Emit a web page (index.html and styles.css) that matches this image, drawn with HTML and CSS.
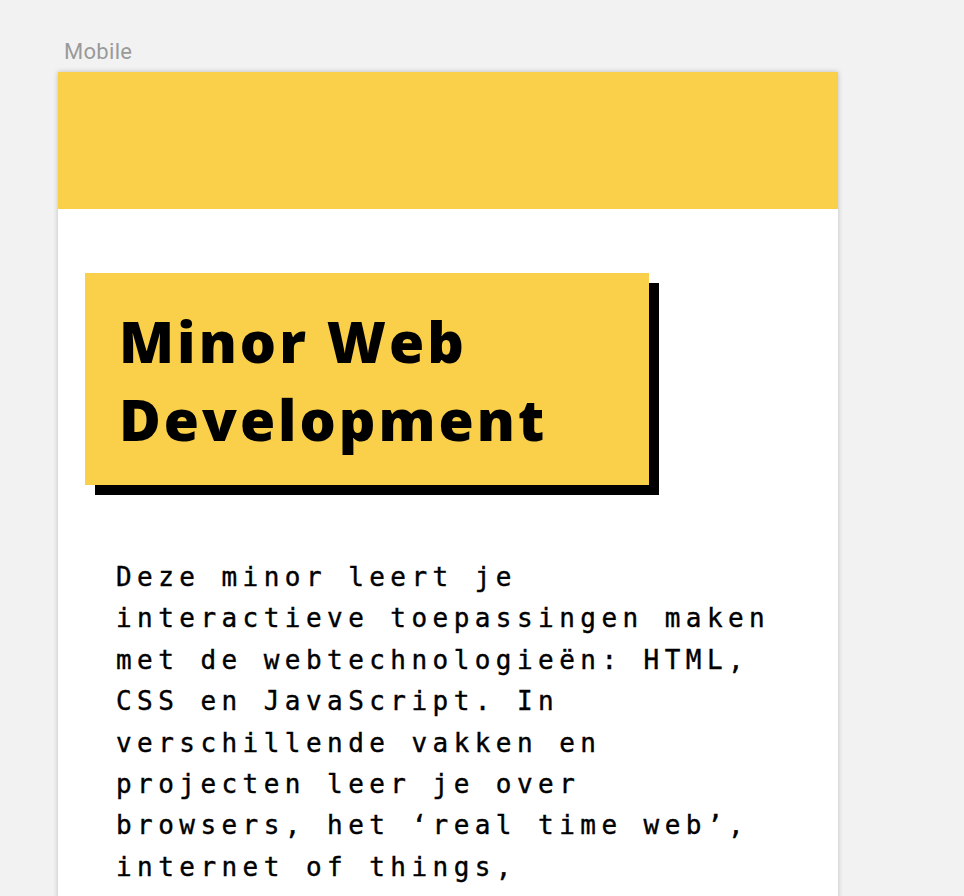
FILE: index.html
```html
<!DOCTYPE html>
<html lang="nl">
<head>
<meta charset="utf-8">
<title>Mobile</title>
<link rel="stylesheet" href="styles.css">
</head>
<body>
  <div class="canvas">
    <div class="frame-label">Mobile</div>
    <div class="frame">
      <header class="topbar"></header>
      <main class="content">
        <h1 class="title">Minor Web<br>Development</h1>
        <p class="intro">Deze minor leert je interactieve toepassingen maken met de webtechnologieën: HTML, CSS en JavaScript. In verschillende vakken en projecten leer je over browsers, het ‘real time web’, internet of things, performance, toegankelijkheid en interactiedesign.</p>
      </main>
    </div>
  </div>
</body>
</html>
```
FILE: styles.css
```css
html, body {
  margin: 0;
  padding: 0;
  overflow: hidden;
  height: 100%;
}
body {
  background: #f2f2f2;
}
.canvas {
  padding: 40px 0 0 58px;
}
.frame-label {
  font-family: Roboto, "Liberation Sans", sans-serif;
  font-size: 22px;
  line-height: 24px;
  color: #9a9a9a;
  padding-left: 6px;
  margin-bottom: 8px;
  letter-spacing: 0.3px;
}
.frame {
  width: 780px;
  min-height: 1000px;
  background: #fff;
  box-shadow: 0 0 5px rgba(0, 0, 0, 0.22);
}
.topbar {
  height: 137px;
  background: #fad04a;
}
.content {
  padding: 64px 58px 0 27px;
}
.title {
  margin: 0;
  width: 564px;
  height: 212px;
  box-sizing: border-box;
  padding: 29px 0 0 34px;
  background: #fad04a;
  box-shadow: 10px 10px 0 #000;
  font-family: "Open Sans", Inter, sans-serif;
  font-weight: 800;
  font-size: 57px;
  line-height: 78px;
  letter-spacing: 3px;
  color: #000;
}
.intro {
  margin: 72px 0 0 31px;
  font-family: "DejaVu Sans Mono", "Liberation Mono", monospace;
  font-size: 26px;
  line-height: 41.4px;
  letter-spacing: 5.45px;
  -webkit-text-stroke: 0.4px #000;
  color: #000;
}
```
